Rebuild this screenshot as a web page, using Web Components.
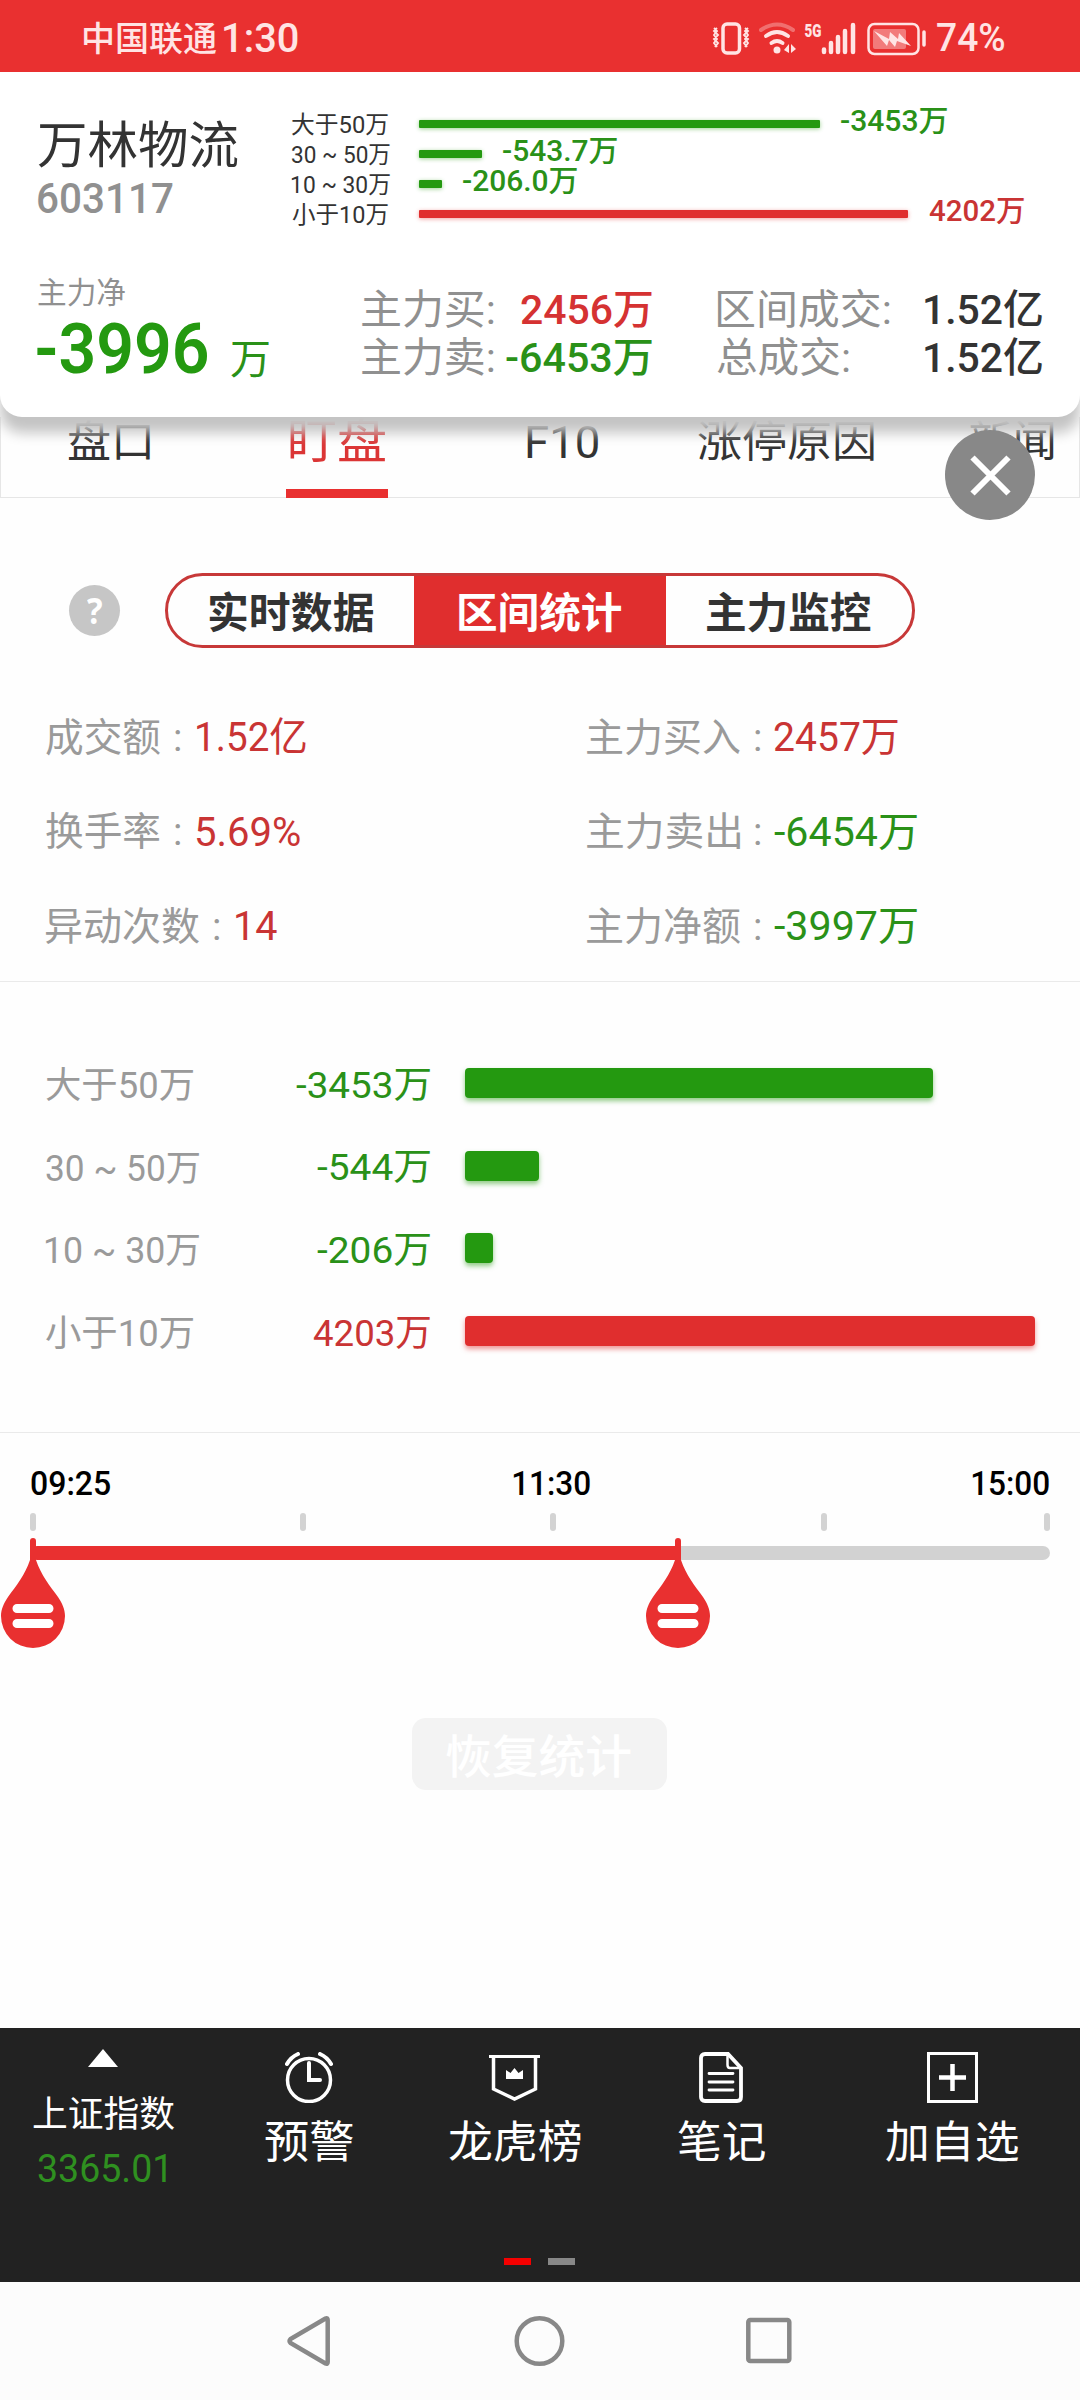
<!DOCTYPE html>
<html lang="zh-CN">
<head>
  <meta charset="utf-8">
  <title>万林物流 603117</title>
  <style>
    body {
      margin: 0;
      background: #FEFEFE;
      color: #333333;
      font-family: Roboto, "Noto Sans CJK SC", sans-serif;
      --up: #C93434;
      --down: #2A9118;
      --bar-up: #E02E2E;
      --bar-down: #249910;
      --muted: #9A9A9A;
    }
  </style>
</head>
<body>
  <phone-screen></phone-screen>

  <script>
    // Text stretched so that its visible glyphs are exactly `w` pixels wide
    class FitText extends HTMLElement {
      constructor() {
        super();
        this.attachShadow({ mode: 'open' });
        this.shadowRoot.innerHTML = `
          <style>
            :host {
              display: block;
              flex: none;
              height: 1em;
              line-height: 1;
              white-space: nowrap;
            }

            span {
              display: block;
              width: max-content;
              transform-origin: 0 50%;
            }
          </style>
          <span><slot></slot></span>
        `;
      }

      connectedCallback() {
        const size = this.getAttribute('size');
        if (size) this.style.fontSize = `${size}px`;
        const width = Number(this.getAttribute('w'));
        const css = getComputedStyle(this);
        const ctx = document.createElement('canvas').getContext('2d');
        ctx.font = `${css.fontWeight} ${css.fontSize} ${css.fontFamily}`;
        const m = ctx.measureText(this.textContent.trim());
        const scale = width / (m.actualBoundingBoxRight + m.actualBoundingBoxLeft);
        this.style.width = `${width}px`;
        this.shadowRoot.querySelector('span').style.transform =
          `scaleX(${scale}) translate(${m.actualBoundingBoxLeft}px, var(--drop, 0.05em))`;
      }
    }

    class StatusBar extends HTMLElement {
      constructor() {
        super();
        this.attachShadow({ mode: 'open' });
        this.shadowRoot.innerHTML = `
          <style>
            :host {
              display: flex;
              align-items: center;
              box-sizing: border-box;
              height: 72px;
              padding: 3px 76px 0 84px;
              background: #E93030;
              color: #FFE4E4;
              --drop: 0.02em;
            }

            .time { margin-left: 8px; }
            .icons { margin-left: auto; margin-right: 10px; display: block; }
          </style>
          <fit-text size="34" w="132" style="font-weight:500">中国联通</fit-text>
          <fit-text class="time" size="41" w="74" style="font-weight:500">1:30</fit-text>
          <svg class="icons" width="216" height="36" viewBox="711 18 216 36" fill="none" stroke="#FFE4E4">
            <rect x="723" y="22" width="16.500" height="29" rx="4" stroke-width="3.500"/>
            <path d="M717 26l-3 3 4 4-4 4 4 4-3 4M714 26l3 3-3 4 3 4-3 4 3 4M745 26l3 3-4 4 4 4-4 4 3 4M748 26l-3 3 3 4-3 4 3 4-3 4" stroke-width="1.900"/>
            <path d="M761 28q16-11 32 0" stroke-width="4" stroke-linecap="round" opacity=".35"/>
            <path d="M766 34q11-8 22 0M771.500 41q5.500-4 11 0" stroke-width="4" stroke-linecap="round"/>
            <circle cx="777" cy="48" r="3.500" fill="#FFE4E4" stroke="none"/>
            <path d="M784 48l5-6v9zM791 42v9l5-4z" fill="#FFE4E4" stroke="none"/>
            <path d="M824 47.500v2.500M831 41v9M838 35v15M845 29v21M853 23v27" stroke-width="4.500" stroke-linecap="round"/>
            <rect x="868.500" y="22" width="50" height="30" rx="6" stroke-width="2.500"/>
            <rect x="873" y="27" width="33" height="20" rx="2" fill="#FFE4E4" stroke="none" opacity=".42"/>
            <path d="M874 29l15 8 1-7 8 7 1-6 12 13-14-5-2 6-6-7-2 6z" fill="#FFE4E4" stroke="none"/>
            <path d="M924 30v13" stroke-width="3.500" stroke-linecap="round"/>
            <text x="804.500" y="35" font-family="Roboto" font-weight="900" font-size="19" textLength="17" lengthAdjust="spacingAndGlyphs" fill="#FFE4E4" stroke="none">5G</text>
          </svg>
          <fit-text size="39" w="67" style="font-weight:500">74%</fit-text>
        `;
      }
    }

    // One line of the compact chart: label, thin bar, amount after the bar
    class FlowLine extends HTMLElement {
      constructor() {
        super();
        this.attachShadow({ mode: 'open' });
      }

      connectedCallback() {
        const kind = this.hasAttribute('up') ? 'up' : 'down';
        this.shadowRoot.innerHTML = `
          <style>
            :host {
              display: flex;
              align-items: center;
              height: 30px;
              color: #333333;
            }

            .label { width: 127px; }

            .bar {
              width: ${this.getAttribute('length')}px;
              height: 8px;
              border-radius: 1px;
              background: var(--bar-${kind});
              box-shadow: 0 1px 4px color-mix(in srgb, var(--bar-${kind}) 45%, transparent);
            }

            .value {
              padding-bottom: 6px;
              margin-left: 21px;
              color: var(--${kind});
              font-weight: 500;
            }
          </style>
          <div class="label"><fit-text size="24" w="${this.getAttribute('lw')}">${this.getAttribute('label')}</fit-text></div>
          <div class="bar"></div>
          <fit-text class="value" size="29.500" w="${this.getAttribute('vw')}">${this.getAttribute('value')}</fit-text>
        `;
      }
    }

    class StockSummary extends HTMLElement {
      constructor() {
        super();
        this.attachShadow({ mode: 'open' });
        this.shadowRoot.innerHTML = `
          <style>
            :host {
              display: block;
              box-sizing: border-box;
              position: relative;
              z-index: 1;
              height: 345px;
              padding: 37px 38px 0;
              background: #FFFFFF;
              border-radius: 0 0 22px 22px;
              box-shadow: 0 16px 13px #C4C4C4;
            }

            .top, .bottom { display: flex; }
            .name { width: 254px; padding-top: 10px; --drop: 0.03em; }
            .code { margin-top: 8px; color: #909090; font-weight: 500; }
            .net { width: 324px; padding-top: 47px; color: #909090; }

            .total {
              display: flex;
              align-items: center;
              gap: 24px;
              height: 72px;
              margin-top: 5px;
              margin-left: -1px;
              color: var(--bar-down);
            }

            .total b { font-weight: 600; --drop: 0.01em; }
            .unit { padding-top: 24px; color: var(--down); --drop: 0.02em; }
            .pairs { width: 290px; padding-top: 56px; }
            .pairs + .pairs { width: 325px; margin-left: 65px; }

            .pair {
              display: flex;
              align-items: center;
              justify-content: space-between;
              height: 48px;
              color: #909090;
              --drop: 0.03em;
            }

            .pair :last-child { font-weight: 500; color: #333333; }
            .pair .up { color: #D53232; }
            .pair .down { color: var(--down); }
          </style>
          <div class="top">
            <div class="name">
              <fit-text size="50" w="200">万林物流</fit-text>
              <fit-text class="code" size="42" w="135">603117</fit-text>
            </div>
            <div>
              <flow-line label="大于50万" lw="96" length="401" value="-3453万" vw="106"></flow-line>
              <flow-line label="30 ~ 50万" lw="98" length="63" value="-543.7万" vw="114"></flow-line>
              <flow-line label="10 ~ 30万" lw="98" length="23" value="-206.0万" vw="114"></flow-line>
              <flow-line up label="小于10万" lw="96" length="489" value="4202万" vw="95"></flow-line>
            </div>
          </div>
          <div class="bottom">
            <div class="net">
              <fit-text size="30" w="87">主力净</fit-text>
              <div class="total">
                <b><fit-text size="71" w="170">-3996</fit-text></b>
                <fit-text class="unit" size="41" w="38">万</fit-text>
              </div>
            </div>
            <div class="pairs">
              <div class="pair"><fit-text size="41" w="132">主力买:</fit-text><fit-text class="up" size="41" w="131">2456万</fit-text></div>
              <div class="pair"><fit-text size="41" w="132">主力卖:</fit-text><fit-text class="down" size="41" w="146">-6453万</fit-text></div>
            </div>
            <div class="pairs">
              <div class="pair"><fit-text size="41" w="173">区间成交:</fit-text><fit-text size="41" w="117">1.52亿</fit-text></div>
              <div class="pair"><fit-text size="41" w="132">总成交:</fit-text><fit-text size="41" w="117">1.52亿</fit-text></div>
            </div>
          </div>
        `;
      }
    }

    class TabStrip extends HTMLElement {
      constructor() {
        super();
        this.attachShadow({ mode: 'open' });
        this.shadowRoot.innerHTML = `
          <style>
            :host {
              display: flex;
              box-sizing: border-box;
              position: relative;
              height: 81px;
              padding-left: 67px;
              border: 1px solid #E6E6E6;
              border-top: 0;
            }

            .tab {
              display: flex;
              align-items: center;
              height: 46px;
              flex: none;
            }

            .active {
              box-sizing: border-box;
              width: 102px;
              height: 81px;
              margin-left: 136px;
              padding: 0 4px 26px;
              border-bottom: 9px solid #E93030;
              color: #DB3535;
            }

            .close {
              position: absolute;
              left: 944px;
              top: 13px;
              z-index: 2;
            }
          </style>
          <div class="tab"><fit-text size="43" w="82">盘口</fit-text></div>
          <div class="tab active"><fit-text size="48" w="95">盯盘</fit-text></div>
          <div class="tab" style="margin-left:139px"><fit-text size="45" w="71">F10</fit-text></div>
          <div class="tab" style="margin-left:100px"><fit-text size="43" w="176">涨停原因</fit-text></div>
          <div class="tab" style="margin-left:95px"><fit-text size="43" w="85">新闻</fit-text></div>
          <svg class="close" width="90" height="90">
            <circle cx="45" cy="45" r="45" fill="#888888"/>
            <path d="M27.500 27.500l36 36M63.500 27.500l-36 36" stroke="#FFFFFF" stroke-width="6"/>
          </svg>
        `;
      }
    }

    class SegmentControl extends HTMLElement {
      constructor() {
        super();
        this.attachShadow({ mode: 'open' });
        this.shadowRoot.innerHTML = `
          <style>
            :host {
              display: flex;
              align-items: center;
              padding: 75px 0 0 69px;
              font-weight: 700;
            }

            .help {
              display: flex;
              align-items: center;
              justify-content: center;
              width: 51px;
              height: 51px;
              border-radius: 50%;
              background: #C6C6C6;
              color: #FFFFFF;
              font-family: "Open Sans", sans-serif;
              --drop: 0;
            }

            .group {
              display: grid;
              grid-template-columns: 246px 252px 246px;
              margin-left: 45px;
              box-sizing: border-box;
              width: 750px;
              height: 75px;
              border: 3px solid #C73838;
              border-radius: 38px;
              overflow: hidden;
              --drop: 0.08em;
            }

            .group div {
              display: flex;
              align-items: center;
              justify-content: center;
            }

            .on { background: #E02E2E; color: #FFFFFF; }
          </style>
          <div class="help"><fit-text size="35" w="15">?</fit-text></div>
          <div class="group">
            <div><fit-text size="41.500" w="164">实时数据</fit-text></div>
            <div class="on"><fit-text size="41.500" w="163">区间统计</fit-text></div>
            <div><fit-text size="41.500" w="164">主力监控</fit-text></div>
          </div>
        `;
      }
    }

    class StatGrid extends HTMLElement {
      constructor() {
        super();
        this.attachShadow({ mode: 'open' });
        const stats = [
          ['成交额', 114, '1.52亿', 109, 'up'],
          ['主力买入', 153, '2457万', 124, 'up'],
          ['换手率', 114, '5.69%', 103, 'up'],
          ['主力卖出', 153, '-6454万', 143, 'down'],
          ['异动次数', 153, '14', 41, 'up'],
          ['主力净额', 153, '-3997万', 143, 'down'],
        ];
        this.shadowRoot.innerHTML = `
          <style>
            :host {
              display: grid;
              grid-template-columns: 541px 493px;
              grid-auto-rows: 94.500px;
              box-sizing: border-box;
              height: 334px;
              padding: 41px 0 0 46px;
              border-bottom: 1px solid #EAEAEA;
            }

            .stat { display: flex; align-items: center; color: var(--muted); }
            .colon { margin-left: 15px; }
            .up { color: var(--up); }
            .down { color: var(--down); }
            .value { margin-left: 17px; }
            .right .value { margin-left: 14px; }
          </style>
          ${stats.map(([label, lw, value, vw, kind], i) => `
            <div class="stat ${i % 2 ? 'right' : 'left'}">
              <fit-text size="39" w="${lw}">${label}</fit-text>
              <fit-text class="colon" size="39" w="5">:</fit-text>
              <fit-text class="value ${kind}" size="40" w="${vw}">${value}</fit-text>
            </div>
          `).join('')}
        `;
      }
    }

    class FlowChart extends HTMLElement {
      constructor() {
        super();
        this.attachShadow({ mode: 'open' });
        const rows = [
          ['大于50万', 147, '-3453万', 134, 468, 'down'],
          ['30 ~ 50万', 153, '-544万', 113, 74, 'down'],
          ['10 ~ 30万', 153, '-206万', 113, 28, 'down'],
          ['小于10万', 147, '4203万', 117, 570, 'up'],
        ];
        this.shadowRoot.innerHTML = `
          <style>
            :host {
              display: block;
              box-sizing: border-box;
              height: 451px;
              padding: 61px 0 0 46px;
              border-bottom: 1px solid #EAEAEA;
            }

            .row {
              display: grid;
              grid-template-columns: 200px 184px 1fr;
              align-items: center;
              height: 82.600px;
              color: var(--muted);
            }

            .value { justify-self: end; --drop: 0.03em; }

            .bar {
              height: 30px;
              margin: 0 0 2px 35px;
              border-radius: 4px;
            }

            .up { color: var(--up); }
            .down { color: var(--down); }
            .bar.up { background: var(--bar-up); box-shadow: 0 3px 5px rgba(224, 46, 46, 0.5); }
            .bar.down { background: var(--bar-down); box-shadow: 0 3px 5px rgba(36, 153, 16, 0.5); }
          </style>
          ${rows.map(([label, lw, value, vw, length, kind]) => `
            <div class="row">
              <fit-text size="36" w="${lw}">${label}</fit-text>
              <fit-text class="value ${kind}" size="37" w="${vw}">${value}</fit-text>
              <div class="bar ${kind}" style="width:${length}px"></div>
            </div>
          `).join('')}
        `;
      }
    }

    class TimeRange extends HTMLElement {
      constructor() {
        super();
        this.attachShadow({ mode: 'open' });
        const handle = x => `
          <svg class="handle" style="left:${x}px" width="64" height="110" viewBox="0 0 64 110">
            <path d="M29 3a3 3 0 0 1 6 0V22C40 37 49 48 57 59C61 65 64 71 64 78A32 32 0 0 1 0 78C0 71 3 65 7 59C15 48 24 37 29 22Z" fill="#E93030"/>
            <path d="M16 70.500h32M16 85.500h32" stroke="#FFFFFF" stroke-width="9" stroke-linecap="round"/>
          </svg>
        `;
        this.shadowRoot.innerHTML = `
          <style>
            :host {
              display: block;
              position: relative;
              box-sizing: border-box;
              height: 285px;
              padding: 33px 30px 0;
              color: #000000;
              font-weight: 500;
              --drop: 0;
            }

            .times, .ticks { display: flex; }
            .ticks { margin-top: 13px; }

            .ticks i {
              width: 6px;
              height: 18px;
              border-radius: 3px;
              background: #D3D3D3;
            }

            .track {
              height: 14px;
              margin-top: 15px;
              border-radius: 7px;
              background: linear-gradient(90deg, #E93030 651px, #D2D2D2 651px);
            }

            /* handles hang over the track */
            .handle { position: absolute; top: 105px; }
          </style>
          <div class="times">
            <fit-text size="34" w="79" style="margin-left:1px">09:25</fit-text>
            <fit-text size="34" w="77" style="margin-left:403px">11:30</fit-text>
            <fit-text size="34" w="77" style="margin-left:382px">15:00</fit-text>
          </div>
          <div class="ticks">
            <i></i>
            <i style="margin-left:264px"></i>
            <i style="margin-left:244px"></i>
            <i style="margin-left:265px"></i>
            <i style="margin-left:217px"></i>
          </div>
          <div class="track"></div>
          ${handle(1)}${handle(646)}
        `;
      }
    }

    class ResetButton extends HTMLElement {
      constructor() {
        super();
        this.attachShadow({ mode: 'open' });
        this.shadowRoot.innerHTML = `
          <style>
            :host { display: block; height: 310px; }

            button {
              display: flex;
              align-items: center;
              justify-content: center;
              width: 255px;
              height: 72px;
              margin-left: 412px;
              padding: 2px 2px 0 0;
              border: 0;
              border-radius: 14px;
              background: #F3F3F3;
              color: #FFFFFF;
              font-family: inherit;
              font-weight: 500;
            }
          </style>
          <button><fit-text size="46" w="185">恢复统计</fit-text></button>
        `;
      }
    }

    class ToolBar extends HTMLElement {
      constructor() {
        super();
        this.attachShadow({ mode: 'open' });
        this.shadowRoot.innerHTML = `
          <style>
            :host {
              display: flex;
              flex-direction: column;
              box-sizing: border-box;
              height: 254px;
              background: #222222;
              color: #FFFFFF;
            }

            .items {
              display: grid;
              grid-template-columns: 206px 205px 207px 206px 256px;
              height: 230px;
            }

            .item {
              display: flex;
              flex-direction: column;
              align-items: center;
              padding-top: 24px;
            }

            .item fit-text { margin-top: 16px; }
            .index { padding-top: 21px; }
            .index fit-text { margin-top: 28px; }
            .index .quote { margin: 18px 3px 0 0; color: #2F9020; --drop: 0.03em; }

            svg { fill: none; stroke: #FFFFFF; display: block; }
            .pages { display: flex; gap: 17px; margin-left: 504px; }
            .pages i { width: 27px; height: 7px; background: #888888; }
            .pages i:first-child { background: #F50000; }
          </style>
          <div class="items">
            <div class="item index">
              <svg width="30" height="18"><path d="M15 0L30 18H0Z" fill="#FFFFFF" stroke="none"/></svg>
              <fit-text size="36" w="141">上证指数</fit-text>
              <fit-text class="quote" size="38" w="128">3365.01</fit-text>
            </div>
            <div class="item">
              <svg width="48" height="51">
                <circle cx="24" cy="28" r="21.500" stroke-width="3.500"/>
                <path d="M24 11v17h11" stroke-width="4" stroke-linecap="round"/>
                <path d="M2 12Q6 5 13 2M46 12Q42 5 35 2" stroke-width="4" stroke-linecap="round"/>
              </svg>
              <fit-text size="44.500" w="88">预警</fit-text>
            </div>
            <div class="item">
              <svg width="51" height="51">
                <path d="M0 4.500H51" stroke-width="3"/>
                <path d="M4.500 4V37L25.500 47L46.500 37V4" stroke-width="3.500"/>
                <path d="M17 27V18L21.500 21L25.500 16L29.500 21L34 18V27Z" fill="#FFFFFF" stroke="none"/>
              </svg>
              <fit-text size="44.500" w="132">龙虎榜</fit-text>
            </div>
            <div class="item">
              <svg width="44" height="51">
                <path d="M6 2H29L42 16V45Q42 49 38 49H6Q2 49 2 45V6Q2 2 6 2Z" stroke-width="3.800"/>
                <path d="M28.500 3V13Q28.500 16 31 16H42" stroke-width="2.500"/>
                <path d="M10 21.500H34M10 30H34M10 38H34" stroke-width="2.800" stroke-linecap="round"/>
              </svg>
              <fit-text size="44.500" w="87">笔记</fit-text>
            </div>
            <div class="item">
              <svg width="51" height="51">
                <rect x="1.500" y="1.500" width="48" height="48" stroke-width="3"/>
                <path d="M25.500 12V39M12 25.500H39" stroke-width="4.500"/>
              </svg>
              <fit-text size="44.500" w="132">加自选</fit-text>
            </div>
          </div>
          <div class="pages"><i></i><i></i></div>
        `;
      }
    }

    class SystemNav extends HTMLElement {
      constructor() {
        super();
        this.attachShadow({ mode: 'open' });
        this.shadowRoot.innerHTML = `
          <style>
            :host {
              display: flex;
              justify-content: space-between;
              align-items: center;
              box-sizing: border-box;
              height: 118px;
              padding: 0 287px;
              background: #FCFCFC;
            }

            svg { fill: none; stroke: #888888; stroke-width: 4.500px; }
          </style>
          <svg width="44" height="52"><path d="M38.500 3.500L3.500 24Q1.500 26 3.500 28L38.500 48.500Q40.700 49.500 40.700 47V5Q40.700 2.500 38.500 3.500Z"/></svg>
          <svg width="52" height="52"><circle cx="26.500" cy="26" r="22.800"/></svg>
          <svg width="47" height="52"><rect x="2.300" y="5" width="41" height="41" rx="2"/></svg>
        `;
      }
    }

    class PhoneScreen extends HTMLElement {
      constructor() {
        super();
        this.attachShadow({ mode: 'open' });
        this.shadowRoot.innerHTML = `
          <style>
            :host {
              display: block;
              width: 1080px;
              height: 2400px;
              overflow: hidden;
            }
          </style>
          <status-bar></status-bar>
          <stock-summary></stock-summary>
          <tab-strip></tab-strip>
          <segment-control></segment-control>
          <stat-grid></stat-grid>
          <flow-chart></flow-chart>
          <time-range></time-range>
          <reset-button></reset-button>
          <tool-bar></tool-bar>
          <system-nav></system-nav>
        `;
      }
    }

    customElements.define('fit-text', FitText);
    customElements.define('flow-line', FlowLine);
    customElements.define('status-bar', StatusBar);
    customElements.define('stock-summary', StockSummary);
    customElements.define('tab-strip', TabStrip);
    customElements.define('segment-control', SegmentControl);
    customElements.define('stat-grid', StatGrid);
    customElements.define('flow-chart', FlowChart);
    customElements.define('time-range', TimeRange);
    customElements.define('reset-button', ResetButton);
    customElements.define('tool-bar', ToolBar);
    customElements.define('system-nav', SystemNav);
    customElements.define('phone-screen', PhoneScreen);
  </script>
</body>
</html>
